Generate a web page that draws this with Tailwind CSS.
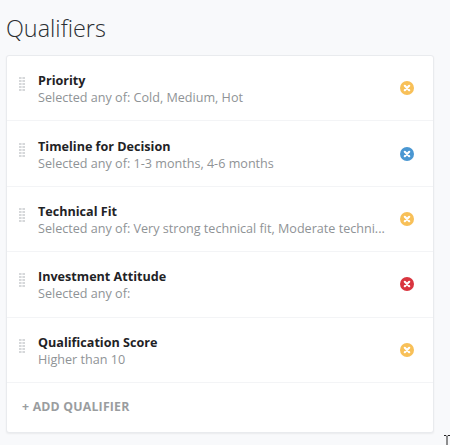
<!DOCTYPE html>
<html lang="en">
  <head>
    <meta charset="UTF-8" />
    <script src="https://cdn.jsdelivr.net/npm/@tailwindcss/browser@4"></script>
    <title>Qualifiers</title>
  </head>
  <body class="relative w-[450px] h-[445px] overflow-hidden bg-[#f8f9fb] font-['Open_Sans',sans-serif]">
    <div class="pl-[6px] pr-[16px] pt-[12px]">
      <h1 class="text-[23.4px] leading-[32px] font-light text-[#2b2f32] mb-[11px]">Qualifiers</h1>
      <div class="bg-white rounded-[3px] border border-[#e9ebee] shadow-[0_1px_2px_rgba(0,0,0,0.06)]">
        <!-- rows -->
        <div class="h-[65.4px] flex items-center pl-[12px] pr-[19px] border-b border-[#f3f4f6]">
          <svg class="w-[6px] h-[14px] mr-[13px] -mt-[8px] shrink-0 text-[#d6d8da]" viewBox="0 0 7 14" preserveAspectRatio="none" fill="currentColor"><path d="M0 0h3v2H0zM4 0h3v2H4zM0 3h3v2H0zM4 3h3v2H4zM0 6h3v2H0zM4 6h3v2H4zM0 9h3v2H0zM4 9h3v2H4zM0 12h3v2H0zM4 12h3v2H4z"/></svg>
          <div class="flex-1 min-w-0 pt-[2px]">
            <div class="text-[12.6px] leading-[17px] font-bold text-[#1f2326]">Priority</div>
            <div class="text-[12.6px] leading-[17px] text-[#8f9396]">Selected any of: Cold, Medium, Hot</div>
          </div>
          <svg class="w-[14px] h-[14px] ml-[14px] shrink-0 text-[#f8c058]" viewBox="0 0 14 14"><circle cx="7" cy="7" r="7" fill="currentColor"/><path d="M4.8 4.8l4.4 4.4M9.2 4.8l-4.4 4.4" stroke="#fff" stroke-width="2.2" stroke-linecap="round"/></svg>
        </div>
        <div class="h-[65.4px] flex items-center pl-[12px] pr-[19px] border-b border-[#f3f4f6]">
          <svg class="w-[6px] h-[14px] mr-[13px] -mt-[8px] shrink-0 text-[#d6d8da]" viewBox="0 0 7 14" preserveAspectRatio="none" fill="currentColor"><path d="M0 0h3v2H0zM4 0h3v2H4zM0 3h3v2H0zM4 3h3v2H4zM0 6h3v2H0zM4 6h3v2H4zM0 9h3v2H0zM4 9h3v2H4zM0 12h3v2H0zM4 12h3v2H4z"/></svg>
          <div class="flex-1 min-w-0 pt-[2px]">
            <div class="text-[12.6px] leading-[17px] font-bold text-[#1f2326]">Timeline for Decision</div>
            <div class="text-[12.6px] leading-[17px] text-[#8f9396]">Selected any of: 1-3 months, 4-6 months</div>
          </div>
          <svg class="w-[14px] h-[14px] ml-[14px] shrink-0 text-[#4a97d2]" viewBox="0 0 14 14"><circle cx="7" cy="7" r="7" fill="currentColor"/><path d="M4.8 4.8l4.4 4.4M9.2 4.8l-4.4 4.4" stroke="#fff" stroke-width="2.2" stroke-linecap="round"/></svg>
        </div>
        <div class="h-[65.4px] flex items-center pl-[12px] pr-[19px] border-b border-[#f3f4f6]">
          <svg class="w-[6px] h-[14px] mr-[13px] -mt-[8px] shrink-0 text-[#d6d8da]" viewBox="0 0 7 14" preserveAspectRatio="none" fill="currentColor"><path d="M0 0h3v2H0zM4 0h3v2H4zM0 3h3v2H0zM4 3h3v2H4zM0 6h3v2H0zM4 6h3v2H4zM0 9h3v2H0zM4 9h3v2H4zM0 12h3v2H0zM4 12h3v2H4z"/></svg>
          <div class="flex-1 min-w-0 pt-[2px]">
            <div class="text-[12.6px] leading-[17px] font-bold text-[#1f2326]">Technical Fit</div>
            <div class="text-[12.6px] leading-[17px] text-[#8f9396] whitespace-nowrap">Selected any of: Very strong technical fit, Moderate techni...</div>
          </div>
          <svg class="w-[14px] h-[14px] ml-[14px] shrink-0 text-[#f8c058]" viewBox="0 0 14 14"><circle cx="7" cy="7" r="7" fill="currentColor"/><path d="M4.8 4.8l4.4 4.4M9.2 4.8l-4.4 4.4" stroke="#fff" stroke-width="2.2" stroke-linecap="round"/></svg>
        </div>
        <div class="h-[65.4px] flex items-center pl-[12px] pr-[19px] border-b border-[#f3f4f6]">
          <svg class="w-[6px] h-[14px] mr-[13px] -mt-[8px] shrink-0 text-[#d6d8da]" viewBox="0 0 7 14" preserveAspectRatio="none" fill="currentColor"><path d="M0 0h3v2H0zM4 0h3v2H4zM0 3h3v2H0zM4 3h3v2H4zM0 6h3v2H0zM4 6h3v2H4zM0 9h3v2H0zM4 9h3v2H4zM0 12h3v2H0zM4 12h3v2H4z"/></svg>
          <div class="flex-1 min-w-0 pt-[2px]">
            <div class="text-[12.6px] leading-[17px] font-bold text-[#1f2326]">Investment Attitude</div>
            <div class="text-[12.6px] leading-[17px] text-[#8f9396]">Selected any of:</div>
          </div>
          <svg class="w-[14px] h-[14px] ml-[14px] shrink-0 text-[#d9353f]" viewBox="0 0 14 14"><circle cx="7" cy="7" r="7" fill="currentColor"/><path d="M4.8 4.8l4.4 4.4M9.2 4.8l-4.4 4.4" stroke="#fff" stroke-width="2.2" stroke-linecap="round"/></svg>
        </div>
        <div class="h-[65.4px] flex items-center pl-[12px] pr-[19px] border-b border-[#f3f4f6]">
          <svg class="w-[6px] h-[14px] mr-[13px] -mt-[8px] shrink-0 text-[#d6d8da]" viewBox="0 0 7 14" preserveAspectRatio="none" fill="currentColor"><path d="M0 0h3v2H0zM4 0h3v2H4zM0 3h3v2H0zM4 3h3v2H4zM0 6h3v2H0zM4 6h3v2H4zM0 9h3v2H0zM4 9h3v2H4zM0 12h3v2H0zM4 12h3v2H4z"/></svg>
          <div class="flex-1 min-w-0 pt-[2px]">
            <div class="text-[12.6px] leading-[17px] font-bold text-[#1f2326]">Qualification Score</div>
            <div class="text-[12.6px] leading-[17px] text-[#8f9396]">Higher than 10</div>
          </div>
          <svg class="w-[14px] h-[14px] ml-[14px] shrink-0 text-[#f8c058]" viewBox="0 0 14 14"><circle cx="7" cy="7" r="7" fill="currentColor"/><path d="M4.8 4.8l4.4 4.4M9.2 4.8l-4.4 4.4" stroke="#fff" stroke-width="2.2" stroke-linecap="round"/></svg>
        </div>
        <div class="h-[49px] flex items-center pl-[15px] text-[12.3px] font-bold text-[#9a9d9f] tracking-[0.2px]">+ ADD QUALIFIER</div>
      </div>
    </div>
    <!-- text cursor at the bottom edge -->
    <svg class="absolute left-[443px] top-[434px] w-[8px] h-[11px] text-[#222]" viewBox="0 0 8 11" fill="none" stroke="currentColor" stroke-width="1"><path d="M1 1.5h2l1 1 1-1h2M4 2.5V11"/></svg>
  </body>
</html>
